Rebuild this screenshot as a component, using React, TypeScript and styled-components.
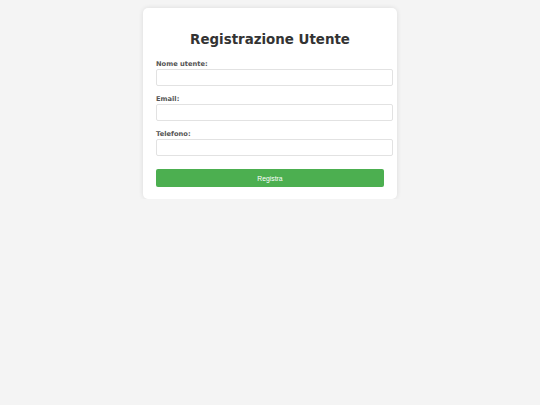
import React from "react";
import styled, { createGlobalStyle } from "styled-components";

const GlobalStyle = createGlobalStyle`
  html, body {
    margin: 0;
    padding: 0;
    background: #f4f4f4;
  }
  body {
    padding-top: 8px;
    font-family: "DejaVu Sans", sans-serif;
  }
`;

const Card = styled.div`
  width: 228px;
  margin: 0 auto;
  padding: 13px 13px 12px;
  background: #ffffff;
  border-radius: 5px;
  box-shadow: 0 0 5px rgba(0, 0, 0, 0.1);
`;

const Title = styled.h2`
  margin: 10px 0 11px;
  font-family: "DejaVu Sans", sans-serif;
  font-size: 13.4px;
  font-weight: bold;
  color: #333333;
  text-align: center;
  line-height: 18px;
`;

const Form = styled.form`
  display: flex;
  flex-direction: column;
`;

const Field = styled.div`
  display: flex;
  flex-direction: column;
  margin-bottom: 9px;
`;

const Label = styled.label`
  font-family: "DejaVu Sans", sans-serif;
  font-size: 6.7px;
  font-weight: bold;
  color: #555555;
  line-height: 8px;
  margin-bottom: 1px;
`;

const Input = styled.input`
  box-sizing: content-box;
  width: 100%;
  height: 7px;
  padding: 4px 3.5px;
  border: 1px solid #e2e2e2;
  border-radius: 2px;
  background: #fff;
  outline: none;
`;

const Button = styled.button`
  margin-top: 4px;
  width: 100%;
  height: 18px;
  border: none;
  border-radius: 2px;
  background: #4caf50;
  color: #ffffff;
  font-family: "Liberation Sans", Arial, sans-serif;
  font-size: 6.8px;
  cursor: pointer;
`;

export default function App() {
  return (
    <>
      <GlobalStyle />
      <Card>
        <Title>Registrazione Utente</Title>
        <Form onSubmit={(e) => e.preventDefault()}>
          <Field>
            <Label htmlFor="nome">Nome utente:</Label>
            <Input id="nome" type="text" />
          </Field>
          <Field>
            <Label htmlFor="email">Email:</Label>
            <Input id="email" type="email" />
          </Field>
          <Field>
            <Label htmlFor="telefono">Telefono:</Label>
            <Input id="telefono" type="tel" />
          </Field>
          <Button type="submit">Registra</Button>
        </Form>
      </Card>
    </>
  );
}
